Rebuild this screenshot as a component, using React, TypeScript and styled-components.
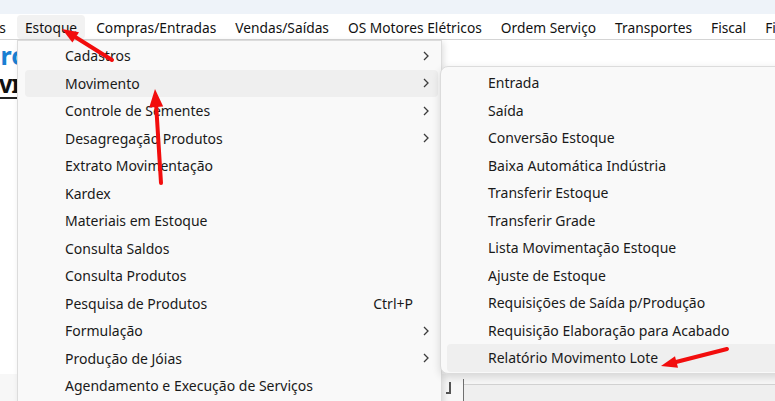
import React from 'react'
import styled, { createGlobalStyle } from 'styled-components'

const GlobalStyle = createGlobalStyle`
  html, body {
    margin: 0;
    padding: 0;
    background: #fff;
  }
  body {
    font-family: "Noto Sans", "Open Sans", sans-serif;
    color: #1a1a1a;
  }
`

const topMenu = ['os', 'Estoque', 'Compras/Entradas', 'Vendas/Saídas', 'OS Motores Elétricos', 'Ordem Serviço', 'Transportes', 'Fiscal', 'Fi']

type Entry = { label: string; sub?: boolean; shortcut?: string }

const estoque: Entry[] = [
  { label: 'Cadastros', sub: true },
  { label: 'Movimento', sub: true },
  { label: 'Controle de Sementes', sub: true },
  { label: 'Desagregação Produtos', sub: true },
  { label: 'Extrato Movimentação' },
  { label: 'Kardex' },
  { label: 'Materiais em Estoque' },
  { label: 'Consulta Saldos' },
  { label: 'Consulta Produtos' },
  { label: 'Pesquisa de Produtos', shortcut: 'Ctrl+P' },
  { label: 'Formulação', sub: true },
  { label: 'Produção de Jóias', sub: true },
  { label: 'Agendamento e Execução de Serviços' },
]

const movimento = [
  'Entrada',
  'Saída',
  'Conversão Estoque',
  'Baixa Automática Indústria',
  'Transferir Estoque',
  'Transferir Grade',
  'Lista Movimentação Estoque',
  'Ajuste de Estoque',
  'Requisições de Saída p/Produção',
  'Requisição Elaboração para Acabado',
  'Relatório Movimento Lote',
]

export default function App() {
  return (
    <Screen>
      <GlobalStyle />
      <TitleStrip />
      <MenuBar>
        {topMenu.map((m) => (
          <MenuBarItem key={m} $active={m === 'Estoque'}>{m}</MenuBarItem>
        ))}
      </MenuBar>
      <Workspace>
        <Brand>Pro</Brand>
        <SubTitle>VIS</SubTitle>
        <Spacer />
        <Footer>
          <Notch />
          <Field />
        </Footer>
      </Workspace>

      <Dropdown>
        {estoque.map((e) => (
          <Row key={e.label} $hover={e.label === 'Movimento'}>
            <Label>{e.label}</Label>
            {e.shortcut && <Shortcut>{e.shortcut}</Shortcut>}
            {e.sub && <Chevron />}
          </Row>
        ))}
      </Dropdown>

      <Submenu>
        {movimento.map((m) => (
          <SubRow key={m} $hover={m === 'Relatório Movimento Lote'}>{m}</SubRow>
        ))}
      </Submenu>

      <Arrows viewBox="0 0 775 401">
        <line x1="112" y1="60" x2="76" y2="37.5" />
        <polygon points="62,29 79,32.3 72.4,42.5" />
        <line x1="161" y1="183" x2="156.2" y2="106" />
        <polygon points="155,89 163.2,106.5 149.2,107.4" />
        <line x1="727" y1="349" x2="676" y2="362" />
        <polygon points="661,366 675,356.2 678,367.8" />
      </Arrows>
    </Screen>
  )
}

function Chevron() {
  return (
    <ChevronIcon width="6" height="10" viewBox="0 0 6 10">
      <path d="M1 1l4 4-4 4" />
    </ChevronIcon>
  )
}

const Screen = styled.div`
  position: relative;
  width: 775px;
  height: 401px;
  overflow: hidden;
  display: flex;
  flex-direction: column;
  background: #fff;
`

const TitleStrip = styled.div`
  height: 14px;
  flex-shrink: 0;
  background: #eef3f9;
`

const MenuBar = styled.nav`
  height: 26px;
  flex-shrink: 0;
  display: flex;
  align-items: stretch;
  gap: 3px;
  margin-left: -17px;
  padding-top: 1px;
  box-sizing: border-box;
  border-bottom: 1px solid #d4d4d4;
  white-space: nowrap;
`

const MenuBarItem = styled.div<{ $active?: boolean }>`
  display: flex;
  align-items: center;
  padding: 0 8px;
  font-size: 13.75px;
  color: #111;
  border-radius: 4px;
  background: ${(p) => (p.$active ? '#f2f2f2' : 'transparent')};
`

const Workspace = styled.div`
  flex: 1;
  display: flex;
  flex-direction: column;
  background: #fff;
`

const Brand = styled.div`
  margin: 1px 0 0 -15px;
  font-size: 25px;
  line-height: 28px;
  font-weight: 700;
  color: #1a7fd2;
`

const SubTitle = styled.div`
  margin: 6px 0 0 -1px;
  width: 40px;
  font-size: 20px;
  line-height: 22px;
  font-weight: 800;
  letter-spacing: -1px;
  color: #111;
  border-bottom: 2px solid #222;
`

const Spacer = styled.div`
  flex: 1;
`

const Footer = styled.div`
  height: 27px;
  display: flex;
  align-items: flex-end;
  background: #f7f7f7;
`

const Notch = styled.div`
  margin: 0 0 7px 446px;
  width: 3px;
  height: 10px;
  border-right: 2px solid #555;
  border-bottom: 2px solid #555;
`

const Field = styled.div`
  margin-left: 12px;
  flex: 1;
  height: 22px;
  border-left: 1px solid #707070;
  background: #efefef;
  box-shadow: inset 0 5px 0 #f7f7f7, inset 0 6px 0 #d2d2d2;
`

const Dropdown = styled.div`
  position: absolute;
  left: 17px;
  top: 40px;
  width: 425px;
  height: 380px;
  box-sizing: border-box;
  padding: 1px 3px 0 7px;
  background: #f9f9f9;
  border: 1px solid #dcdcdc;
  box-shadow: 2px 2px 6px rgba(0, 0, 0, 0.12);
`

const Row = styled.div<{ $hover?: boolean }>`
  display: flex;
  align-items: center;
  height: 27.5px;
  padding: 0 9px 0 40px;
  font-size: 14px;
  color: #1a1a1a;
  border-radius: 4px;
  background: ${(p) => (p.$hover ? '#efefef' : 'transparent')};
  white-space: nowrap;
`

const Label = styled.span`
  flex: 1;
`

const Shortcut = styled.span`
  margin-right: 16px;
`

const ChevronIcon = styled.svg`
  flex-shrink: 0;
  path {
    fill: none;
    stroke: #3c3c3c;
    stroke-width: 1.3;
  }
`

const Submenu = styled.div`
  position: absolute;
  left: 440px;
  top: 66px;
  width: 360px;
  height: 308px;
  box-sizing: border-box;
  padding: 2px 0 0 6px;
  background: #f9f9f9;
  border: 1px solid #dcdcdc;
  border-radius: 8px;
  box-shadow: 0 3px 8px rgba(0, 0, 0, 0.14);
`

const SubRow = styled.div<{ $hover?: boolean }>`
  display: flex;
  align-items: center;
  height: 27.5px;
  padding-left: 41px;
  font-size: 14px;
  color: #1a1a1a;
  border-radius: 4px;
  background: ${(p) => (p.$hover ? '#efefef' : 'transparent')};
  white-space: nowrap;
`

const Arrows = styled.svg`
  position: absolute;
  left: 0;
  top: 0;
  width: 775px;
  height: 401px;
  pointer-events: none;
  line {
    stroke: #f20d0d;
    stroke-width: 4;
    stroke-linecap: round;
  }
  polygon {
    fill: #f20d0d;
  }
`
